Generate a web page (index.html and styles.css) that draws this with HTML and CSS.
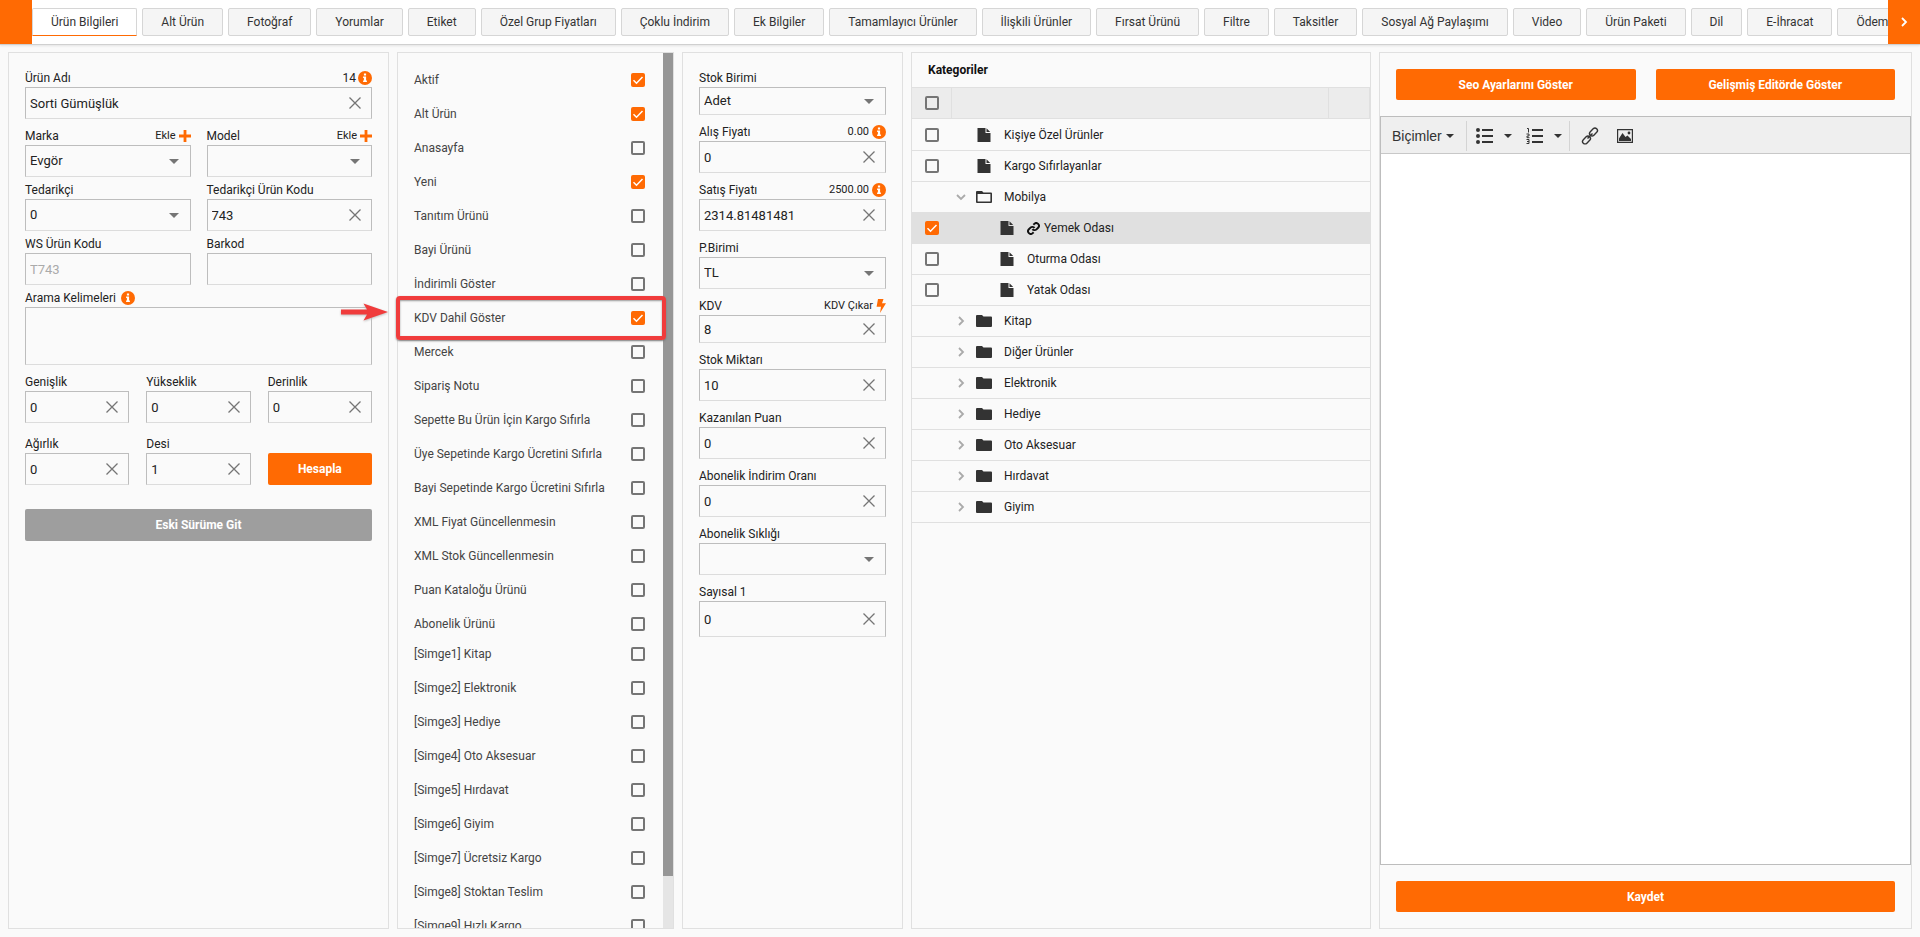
FILE: index.html
```html
<!DOCTYPE html>
<html lang="tr">
<head>
<meta charset="utf-8">
<title>Ürün Bilgileri</title>
<link rel="stylesheet" href="styles.css">
</head>
<body>
<svg class="sprite" aria-hidden="true">
  <symbol id="x" viewBox="0 0 12 12"><path d="M.5.500l11 11M11.500.500L.5 11.500" fill="none" stroke="currentColor" stroke-width="1.300"/></symbol>
  <symbol id="info" viewBox="0 0 14 14"><circle cx="7" cy="7" r="7" fill="currentColor"/><path d="M5.900 2.500h2.200v2h-2.200zM5.100 5.600h3v4h.8v1.300H5.100V9.600h.8V6.900h-.8z" fill="#fff"/></symbol>
  <symbol id="plus" viewBox="0 0 12 12"><path d="M6 0v12M0 6h12" stroke="currentColor" stroke-width="2.800"/></symbol>
  <symbol id="bolt" viewBox="0 0 10 14"><path d="M2 0h5.500L6 4.300H10L4 14l1-6.300H.6z" fill="currentColor"/></symbol>
  <symbol id="file" viewBox="0 0 13 14"><path d="M0 0h8v5h5v9H0zM9 0.300L12.700 4H9z" fill="currentColor"/></symbol>
  <symbol id="folder" viewBox="0 0 16 14"><path d="M0 2a1 1 0 0 1 1-1h5l1.500 1.500H15a1 1 0 0 1 1 1V12a1 1 0 0 1-1 1H1a1 1 0 0 1-1-1z" fill="currentColor"/></symbol>
  <symbol id="folder-open" viewBox="0 0 16 14"><path d="M0 2a1 1 0 0 1 1-1h5l1.500 1.500H15a1 1 0 0 1 1 1V12a1 1 0 0 1-1 1H1a1 1 0 0 1-1-1zM1.600 4v7.400h12.800V4z" fill="currentColor" fill-rule="evenodd"/></symbol>
  <symbol id="chev" viewBox="0 0 10 10"><path d="M3 1l4 4-4 4" fill="none" stroke="currentColor" stroke-width="1.800"/></symbol>
  <symbol id="chain" viewBox="0 0 24 24"><path d="M10 13a5 5 0 0 0 7.540.54l3-3a5 5 0 0 0-7.070-7.070l-1.720 1.710M14 11a5 5 0 0 0-7.540-.54l-3 3a5 5 0 0 0 7.070 7.070l1.710-1.710" fill="none" stroke="currentColor" stroke-width="3.600"/></symbol>
</svg>

<nav class="tabs">
  <button class="tabs-end" type="button" aria-label="Geri"></button>
  <div class="tabs-list">
    <a class="tab active" href="#">Ürün Bilgileri</a><a class="tab" href="#">Alt Ürün</a><a class="tab" href="#">Fotoğraf</a><a class="tab" href="#">Yorumlar</a><a class="tab" href="#">Etiket</a><a class="tab" href="#">Özel Grup Fiyatları</a><a class="tab" href="#">Çoklu İndirim</a><a class="tab" href="#">Ek Bilgiler</a><a class="tab" href="#">Tamamlayıcı Ürünler</a><a class="tab" href="#">İlişkili Ürünler</a><a class="tab" href="#">Fırsat Ürünü</a><a class="tab" href="#">Filtre</a><a class="tab" href="#">Taksitler</a><a class="tab" href="#">Sosyal Ağ Paylaşımı</a><a class="tab" href="#">Video</a><a class="tab" href="#">Ürün Paketi</a><a class="tab" href="#">Dil</a><a class="tab" href="#">E-İhracat</a><a class="tab" href="#">Ödeme</a>
  </div>
  <button class="tabs-end" type="button" aria-label="İleri"><svg width="10" height="10"><use href="#chev"/></svg></button>
</nav>

<main class="board">
  <section class="panel form">
    <div class="field">
      <div class="field-head"><label for="ad">Ürün Adı</label><span class="hint count">14<svg width="14" height="14"><use href="#info"/></svg></span></div>
      <div class="control"><input id="ad" type="text" value="Sorti Gümüşlük"><button type="button" class="clear" aria-label="Temizle"><svg width="12" height="12"><use href="#x"/></svg></button></div>
    </div>
    <div class="cols-2 space-8">
      <div class="field">
        <div class="field-head"><label for="marka">Marka</label><a class="hint" href="#">Ekle<svg width="12" height="12"><use href="#plus"/></svg></a></div>
        <div class="control drop"><select id="marka"><option>Evgör</option></select></div>
      </div>
      <div class="field">
        <div class="field-head"><label for="model">Model</label><a class="hint" href="#">Ekle<svg width="12" height="12"><use href="#plus"/></svg></a></div>
        <div class="control drop"><select id="model"><option></option></select></div>
      </div>
    </div>
    <div class="cols-2 space-4">
      <div class="field">
        <div class="field-head"><label for="ted">Tedarikçi</label></div>
        <div class="control drop"><select id="ted"><option>0</option></select></div>
      </div>
      <div class="field">
        <div class="field-head"><label for="tedkod">Tedarikçi Ürün Kodu</label></div>
        <div class="control"><input id="tedkod" type="text" value="743"><button type="button" class="clear" aria-label="Temizle"><svg width="12" height="12"><use href="#x"/></svg></button></div>
      </div>
    </div>
    <div class="cols-2 space-4">
      <div class="field">
        <div class="field-head"><label for="ws">WS Ürün Kodu</label></div>
        <div class="control"><input id="ws" type="text" value="T743" disabled></div>
      </div>
      <div class="field">
        <div class="field-head"><label for="barkod">Barkod</label></div>
        <div class="control"><input id="barkod" type="text"></div>
      </div>
    </div>
    <div class="field space-4">
      <div class="field-head start"><label for="arama">Arama Kelimeleri</label><svg class="orange" width="14" height="14"><use href="#info"/></svg></div>
      <div class="control"><textarea id="arama"></textarea></div>
    </div>
    <div class="cols-3 space-8">
      <div class="field"><div class="field-head"><label for="gen">Genişlik</label></div><div class="control"><input id="gen" type="text" value="0"><button type="button" class="clear" aria-label="Temizle"><svg width="12" height="12"><use href="#x"/></svg></button></div></div>
      <div class="field"><div class="field-head"><label for="yuk">Yükseklik</label></div><div class="control"><input id="yuk" type="text" value="0"><button type="button" class="clear" aria-label="Temizle"><svg width="12" height="12"><use href="#x"/></svg></button></div></div>
      <div class="field"><div class="field-head"><label for="der">Derinlik</label></div><div class="control"><input id="der" type="text" value="0"><button type="button" class="clear" aria-label="Temizle"><svg width="12" height="12"><use href="#x"/></svg></button></div></div>
    </div>
    <div class="cols-3 space-12">
      <div class="field"><div class="field-head"><label for="agr">Ağırlık</label></div><div class="control"><input id="agr" type="text" value="0"><button type="button" class="clear" aria-label="Temizle"><svg width="12" height="12"><use href="#x"/></svg></button></div></div>
      <div class="field"><div class="field-head"><label for="desi">Desi</label></div><div class="control"><input id="desi" type="text" value="1"><button type="button" class="clear" aria-label="Temizle"><svg width="12" height="12"><use href="#x"/></svg></button></div></div>
      <button class="btn" type="button">Hesapla</button>
    </div>
    <button class="btn grey" type="button">Eski Sürüme Git</button>
  </section>

  <section class="panel options">
    <div class="options-scroll">
      <ul class="checks">
        <li><label for="c1">Aktif</label><input id="c1" type="checkbox" checked></li>
        <li><label for="c2">Alt Ürün</label><input id="c2" type="checkbox" checked></li>
        <li><label for="c3">Anasayfa</label><input id="c3" type="checkbox"></li>
        <li><label for="c4">Yeni</label><input id="c4" type="checkbox" checked></li>
        <li><label for="c5">Tanıtım Ürünü</label><input id="c5" type="checkbox"></li>
        <li><label for="c6">Bayi Ürünü</label><input id="c6" type="checkbox"></li>
        <li><label for="c7">İndirimli Göster</label><input id="c7" type="checkbox"></li>
        <li><label for="c8">KDV Dahil Göster</label><input id="c8" type="checkbox" checked></li>
        <li><label for="c9">Mercek</label><input id="c9" type="checkbox"></li>
        <li><label for="c10">Sipariş Notu</label><input id="c10" type="checkbox"></li>
        <li><label for="c11">Sepette Bu Ürün İçin Kargo Sıfırla</label><input id="c11" type="checkbox"></li>
        <li><label for="c12">Üye Sepetinde Kargo Ücretini Sıfırla</label><input id="c12" type="checkbox"></li>
        <li><label for="c13">Bayi Sepetinde Kargo Ücretini Sıfırla</label><input id="c13" type="checkbox"></li>
        <li><label for="c14">XML Fiyat Güncellenmesin</label><input id="c14" type="checkbox"></li>
        <li><label for="c15">XML Stok Güncellenmesin</label><input id="c15" type="checkbox"></li>
        <li><label for="c16">Puan Kataloğu Ürünü</label><input id="c16" type="checkbox"></li>
        <li><label for="c17">Abonelik Ürünü</label><input id="c17" type="checkbox"></li>
      </ul>
      <ul class="checks">
        <li><label for="s1">[Simge1] Kitap</label><input id="s1" type="checkbox"></li>
        <li><label for="s2">[Simge2] Elektronik</label><input id="s2" type="checkbox"></li>
        <li><label for="s3">[Simge3] Hediye</label><input id="s3" type="checkbox"></li>
        <li><label for="s4">[Simge4] Oto Aksesuar</label><input id="s4" type="checkbox"></li>
        <li><label for="s5">[Simge5] Hırdavat</label><input id="s5" type="checkbox"></li>
        <li><label for="s6">[Simge6] Giyim</label><input id="s6" type="checkbox"></li>
        <li><label for="s7">[Simge7] Ücretsiz Kargo</label><input id="s7" type="checkbox"></li>
        <li><label for="s8">[Simge8] Stoktan Teslim</label><input id="s8" type="checkbox"></li>
        <li><label for="s9">[Simge9] Hızlı Kargo</label><input id="s9" type="checkbox"></li>
      </ul>
    </div>
    <div class="scrollbar"><div class="thumb"></div></div>
    <div class="callout"></div>
    <svg class="callout-arrow" width="50" height="20" viewBox="0 0 50 20"><path d="M1 7.500h26L23.500 1.500 48 10 23.500 18.500 27 12.500H1z" fill="#f03c3c"/></svg>
  </section>

  <section class="panel form prices">
    <div class="field short"><div class="field-head"><label for="sb">Stok Birimi</label></div><div class="control drop"><select id="sb"><option>Adet</option></select></div></div>
    <div class="field"><div class="field-head"><label for="af">Alış Fiyatı</label><span class="hint">0.00<svg width="14" height="14"><use href="#info"/></svg></span></div><div class="control"><input id="af" type="text" value="0"><button type="button" class="clear" aria-label="Temizle"><svg width="12" height="12"><use href="#x"/></svg></button></div></div>
    <div class="field"><div class="field-head"><label for="sf">Satış Fiyatı</label><span class="hint">2500.00<svg width="14" height="14"><use href="#info"/></svg></span></div><div class="control"><input id="sf" type="text" value="2314.81481481"><button type="button" class="clear" aria-label="Temizle"><svg width="12" height="12"><use href="#x"/></svg></button></div></div>
    <div class="field"><div class="field-head"><label for="pb">P.Birimi</label></div><div class="control drop"><select id="pb"><option>TL</option></select></div></div>
    <div class="field short"><div class="field-head"><label for="kdv">KDV</label><a class="hint" href="#">KDV Çıkar<svg width="10" height="14"><use href="#bolt"/></svg></a></div><div class="control"><input id="kdv" type="text" value="8"><button type="button" class="clear" aria-label="Temizle"><svg width="12" height="12"><use href="#x"/></svg></button></div></div>
    <div class="field"><div class="field-head"><label for="sm">Stok Miktarı</label></div><div class="control"><input id="sm" type="text" value="10"><button type="button" class="clear" aria-label="Temizle"><svg width="12" height="12"><use href="#x"/></svg></button></div></div>
    <div class="field"><div class="field-head"><label for="kp">Kazanılan Puan</label></div><div class="control"><input id="kp" type="text" value="0"><button type="button" class="clear" aria-label="Temizle"><svg width="12" height="12"><use href="#x"/></svg></button></div></div>
    <div class="field"><div class="field-head"><label for="ai">Abonelik İndirim Oranı</label></div><div class="control"><input id="ai" type="text" value="0"><button type="button" class="clear" aria-label="Temizle"><svg width="12" height="12"><use href="#x"/></svg></button></div></div>
    <div class="field"><div class="field-head"><label for="as">Abonelik Sıklığı</label></div><div class="control drop"><select id="as"><option></option></select></div></div>
    <div class="field tall"><div class="field-head"><label for="say">Sayısal 1</label></div><div class="control"><input id="say" type="text" value="0"><button type="button" class="clear" aria-label="Temizle"><svg width="12" height="12"><use href="#x"/></svg></button></div></div>
  </section>

  <section class="panel">
    <h2 class="panel-title">Kategoriler</h2>
    <table class="tree">
      <thead><tr><th class="pick"><input type="checkbox" aria-label="Tümünü seç"></th><th></th><th class="tail"></th></tr></thead>
      <tbody>
        <tr><td class="pick"><input type="checkbox" id="k1"></td><td colspan="2"><div class="node"><span class="twist"></span><svg class="icon" width="13" height="14"><use href="#file"/></svg><label for="k1">Kişiye Özel Ürünler</label></div></td></tr>
        <tr><td class="pick"><input type="checkbox" id="k2"></td><td colspan="2"><div class="node"><span class="twist"></span><svg class="icon" width="13" height="14"><use href="#file"/></svg><label for="k2">Kargo Sıfırlayanlar</label></div></td></tr>
        <tr><td class="pick"></td><td colspan="2"><div class="node"><span class="twist open"><svg width="10" height="10"><use href="#chev"/></svg></span><svg class="icon" width="16" height="14"><use href="#folder-open"/></svg><span>Mobilya</span></div></td></tr>
        <tr class="selected"><td class="pick"><input type="checkbox" id="k3" checked></td><td colspan="2"><div class="node child"><span class="twist"></span><svg class="icon" width="13" height="14"><use href="#file"/></svg><svg class="linked" width="13" height="13"><use href="#chain"/></svg><label for="k3">Yemek Odası</label></div></td></tr>
        <tr><td class="pick"><input type="checkbox" id="k4"></td><td colspan="2"><div class="node child"><span class="twist"></span><svg class="icon" width="13" height="14"><use href="#file"/></svg><label for="k4">Oturma Odası</label></div></td></tr>
        <tr><td class="pick"><input type="checkbox" id="k5"></td><td colspan="2"><div class="node child"><span class="twist"></span><svg class="icon" width="13" height="14"><use href="#file"/></svg><label for="k5">Yatak Odası</label></div></td></tr>
        <tr><td class="pick"></td><td colspan="2"><div class="node"><span class="twist"><svg width="10" height="10"><use href="#chev"/></svg></span><svg class="icon" width="16" height="14"><use href="#folder"/></svg><span>Kitap</span></div></td></tr>
        <tr><td class="pick"></td><td colspan="2"><div class="node"><span class="twist"><svg width="10" height="10"><use href="#chev"/></svg></span><svg class="icon" width="16" height="14"><use href="#folder"/></svg><span>Diğer Ürünler</span></div></td></tr>
        <tr><td class="pick"></td><td colspan="2"><div class="node"><span class="twist"><svg width="10" height="10"><use href="#chev"/></svg></span><svg class="icon" width="16" height="14"><use href="#folder"/></svg><span>Elektronik</span></div></td></tr>
        <tr><td class="pick"></td><td colspan="2"><div class="node"><span class="twist"><svg width="10" height="10"><use href="#chev"/></svg></span><svg class="icon" width="16" height="14"><use href="#folder"/></svg><span>Hediye</span></div></td></tr>
        <tr><td class="pick"></td><td colspan="2"><div class="node"><span class="twist"><svg width="10" height="10"><use href="#chev"/></svg></span><svg class="icon" width="16" height="14"><use href="#folder"/></svg><span>Oto Aksesuar</span></div></td></tr>
        <tr><td class="pick"></td><td colspan="2"><div class="node"><span class="twist"><svg width="10" height="10"><use href="#chev"/></svg></span><svg class="icon" width="16" height="14"><use href="#folder"/></svg><span>Hırdavat</span></div></td></tr>
        <tr><td class="pick"></td><td colspan="2"><div class="node"><span class="twist"><svg width="10" height="10"><use href="#chev"/></svg></span><svg class="icon" width="16" height="14"><use href="#folder"/></svg><span>Giyim</span></div></td></tr>
      </tbody>
    </table>
  </section>

  <section class="panel detail">
    <div class="detail-actions">
      <button class="btn" type="button">Seo Ayarlarını Göster</button>
      <button class="btn" type="button">Gelişmiş Editörde Göster</button>
    </div>
    <div class="editor">
      <div class="toolbar">
        <button type="button" class="tool formats">Biçimler<span class="caret"></span></button>
        <span class="rule"></span>
        <button type="button" class="tool list" aria-label="Madde işaretli liste"><svg width="17" height="16" viewBox="0 0 17 16"><path d="M6 1h11v2H6zM6 7h11v2H6zM6 13h11v2H6z"/><circle cx="2" cy="2" r="2"/><circle cx="2" cy="8" r="2"/><circle cx="2" cy="14" r="2"/></svg><span class="caret"></span></button>
        <button type="button" class="tool list" aria-label="Numaralı liste"><svg width="17" height="16" viewBox="0 0 17 16"><path d="M6 1h11v2H6zM6 7h11v2H6zM6 13h11v2H6z"/><path d="M1 .5h1.500V4.500M.5 6h2.500v2H1v1.700h2.500M.5 11.500h2.500v4H.5M1 13.500h2" fill="none" stroke="#333"/></svg><span class="caret"></span></button>
        <span class="rule"></span>
        <button type="button" class="tool single" aria-label="Bağlantı"><svg width="18" height="18" viewBox="0 0 18 18" fill="none" stroke="#333" stroke-width="1.400"><rect x="8" y="2.500" width="9" height="5" rx="2.500" transform="rotate(-45 12.500 5)"/><rect x="1" y="10.500" width="9" height="5" rx="2.500" transform="rotate(-45 5.500 13)"/><path d="M6.500 11.500l5-5"/></svg></button>
        <button type="button" class="tool single" aria-label="Görsel"><svg width="16" height="14" viewBox="0 0 16 14"><path d="M0 0h16v14H0zM1.200 1.200v11.600h13.600V1.200z" fill-rule="evenodd"/><path d="M2 12V9.500L5.500 4 8.500 8l2-1.500L14 10v2z"/><circle cx="12" cy="4" r="1.400"/></svg></button>
      </div>
      <textarea class="editor-body" aria-label="Açıklama"></textarea>
    </div>
    <button class="btn save" type="button">Kaydet</button>
  </section>
</main>
</body>
</html>
```
FILE: styles.css
```css
* { box-sizing: border-box; }

body {
  margin: 0;
  height: 100vh;
  display: flex;
  flex-direction: column;
  background: #fafafa;
  color: #222;
  font: 12px/18px Roboto, sans-serif;
}

button, input, select, textarea { font: inherit; color: inherit; margin: 0; }
button { border: 0; padding: 0; background: none; cursor: pointer; }
a { color: inherit; text-decoration: none; }
svg { display: block; flex: none; }
.sprite { position: absolute; width: 0; height: 0; }
.orange { color: #ff6a03; }

/* Tab strip */
.tabs {
  display: flex;
  flex: none;
  height: 45px;
  background: #fff;
  border-bottom: 1px solid #d0d0d0;
  box-shadow: 0 1px 2px #e4e4e4;
}
.tabs-end {
  flex: none;
  width: 32px;
  display: flex;
  align-items: center;
  justify-content: center;
  background: #ff6a03;
  color: #fff;
}
.tabs-list {
  flex: 1;
  min-width: 0;
  display: flex;
  align-items: center;
  gap: 5px;
  overflow: hidden;
}
.tab {
  flex: none;
  height: 28px;
  padding: 0 18px;
  line-height: 26px;
  border: 1px solid #d6d6d6;
  border-radius: 2px;
  background: #f5f5f5;
  color: #333;
}
.tab.active { background: #fff; border-bottom-color: #ff6a03; border-radius: 2px 2px 0 0; }

/* Panels */
.board {
  flex: 1;
  min-height: 0;
  display: grid;
  grid-template-columns: 381fr 277fr 221fr 460fr 533fr;
  grid-template-rows: minmax(0, 1fr);
  gap: 8px;
  padding: 7px 8px 8px;
}
.panel { border: 1px solid #e0e0e0; min-width: 0; }
.form { padding: 16px; }

/* Fields */
.field { min-width: 0; }
.field-head { display: flex; justify-content: space-between; align-items: center; height: 18px; }
.field-head.start { justify-content: flex-start; gap: 5px; }
.hint { display: flex; align-items: center; gap: 3px; font-size: 11px; }
.hint.count { font-size: 12px; gap: 2px; }
.hint svg { color: #ff6a03; }
.control {
  position: relative;
  display: flex;
  border: 1px solid #bdbdbd;
  border-bottom-color: #dcdcdc;
}
.control input, .control select {
  flex: 1;
  width: 100%;
  min-width: 0;
  height: 30px;
  padding: 0 4px;
  border: 0;
  background: none;
  font-size: 13px;
  appearance: none;
}
.control input:disabled { color: #aaa; }
.control textarea { flex: 1; width: 100%; min-width: 0; height: 56px; border: 0; padding: 4px; background: none; resize: none; }
.clear { flex: none; width: 32px; display: flex; align-items: center; justify-content: center; color: #757575; }
.drop::after {
  content: "";
  position: absolute;
  right: 11px;
  top: 50%;
  margin-top: -2px;
  border: 5px solid transparent;
  border-top-color: #757575;
  border-bottom: 0;
  pointer-events: none;
}
.short .control input, .short .control select { height: 26px; }
.tall .control input { height: 34px; }
.cols-2 { display: grid; grid-template-columns: 1fr 1fr; gap: 16px; }
.cols-3 { display: grid; grid-template-columns: 1fr 1fr 1fr; gap: 17px; align-items: end; }
.space-4 { margin-top: 4px; }
.space-8 { margin-top: 8px; }
.space-12 { margin-top: 12px; }
.prices { display: flex; flex-direction: column; gap: 8px; }

.btn {
  height: 32px;
  border-radius: 2px;
  background: #ff6a03;
  color: #fff;
  font-weight: 700;
}
.btn.grey { width: 100%; margin-top: 24px; background: #9e9e9e; }

/* Check boxes */
input[type="checkbox"] {
  flex: none;
  display: block;
  appearance: none;
  width: 14px;
  height: 14px;
  border: 2px solid #757575;
  border-radius: 2px;
}
input[type="checkbox"]:checked {
  border: 0;
  background: #ff6a03 url("data:image/svg+xml,%3Csvg xmlns='http://www.w3.org/2000/svg' viewBox='0 0 14 14'%3E%3Cpath d='M2.500 7.200l3 3 6-6.200' fill='none' stroke='%23fff' stroke-width='1.500'/%3E%3C/svg%3E") center / 14px 14px no-repeat;
}

/* Options list */
.options { position: relative; display: flex; }
.options-scroll { flex: 1; overflow: hidden; padding: 12px 18px 0 16px; }
.checks { list-style: none; margin: 0; padding: 0; }
.checks li { display: flex; align-items: center; justify-content: space-between; height: 30px; color: #444; }
.checks li + li { margin-top: 4px; }
.scrollbar { width: 10px; background: #e5e5e5; }
.thumb { height: 94%; background: #969696; }
.callout {
  position: absolute;
  top: 243px;
  left: -2px;
  right: 7px;
  height: 44px;
  border: 4px solid #f03c3c;
  border-radius: 4px;
  box-shadow: 0 1px 2px #777, inset 0 1px 2px #999;
}
.callout-arrow { position: absolute; top: 249px; left: -58px; filter: drop-shadow(0 1px 1px #bbb); }

/* Category tree */
.panel-title { margin: 0; padding: 8px 16px; font-size: 12px; font-weight: 700; color: #111; }
.tree { width: 100%; border-collapse: separate; border-spacing: 0; }
.tree th, .tree td { height: 31px; padding: 0; border-bottom: 1px solid #e0e0e0; }
.tree th { height: 32px; border-top: 1px solid #e0e0e0; border-right: 1px solid #e0e0e0; background: #ececec; }
.tree tbody tr:first-child td { height: 32px; }
.tree .pick { width: 40px; }
.tree .pick input { margin: 0 auto; }
.tree .tail { width: 41px; }
.selected td { background: #e0e0e0; }
.node { display: flex; align-items: center; }
.node.child { padding-left: 23px; }
.twist { width: 18px; height: 10px; display: flex; justify-content: center; color: #aaa; margin-right: 6px; }
.twist.open svg { transform: rotate(90deg); }
.icon { width: 16px; margin-right: 12px; color: #333; }
.linked { margin-right: 4px; color: #111; }

/* Description editor */
.detail { display: flex; flex-direction: column; }
.detail-actions { display: grid; grid-template-columns: 1fr 1fr; gap: 20px; padding: 16px; }
.detail .btn { height: 31px; }
.editor { flex: 1; display: flex; flex-direction: column; border: 1px solid #bdbdbd; }
.toolbar { display: flex; align-items: center; height: 37px; padding-top: 1px; background: #efefef; border-bottom: 1px solid #c8c8c8; }
.tool { display: flex; align-items: center; color: #333; fill: #333; }
.formats { padding: 0 12px 0 11px; font-family: "Liberation Sans", Arial, sans-serif; font-size: 14px; gap: 4px; }
.list { padding: 0 5px 0 9px; gap: 11px; }
.list + .list { padding: 0 7px 0 9px; }
.single { padding: 0 7px 0 11px; }
.rule { width: 1px; height: 30px; background: #d4d4d4; }
.caret { border: 4px solid transparent; border-top-color: #333; border-bottom: 0; }
.editor-body { flex: 1; border: 0; padding: 8px; background: #fff; resize: none; outline: 0; }
.save { margin: 16px; }
```
